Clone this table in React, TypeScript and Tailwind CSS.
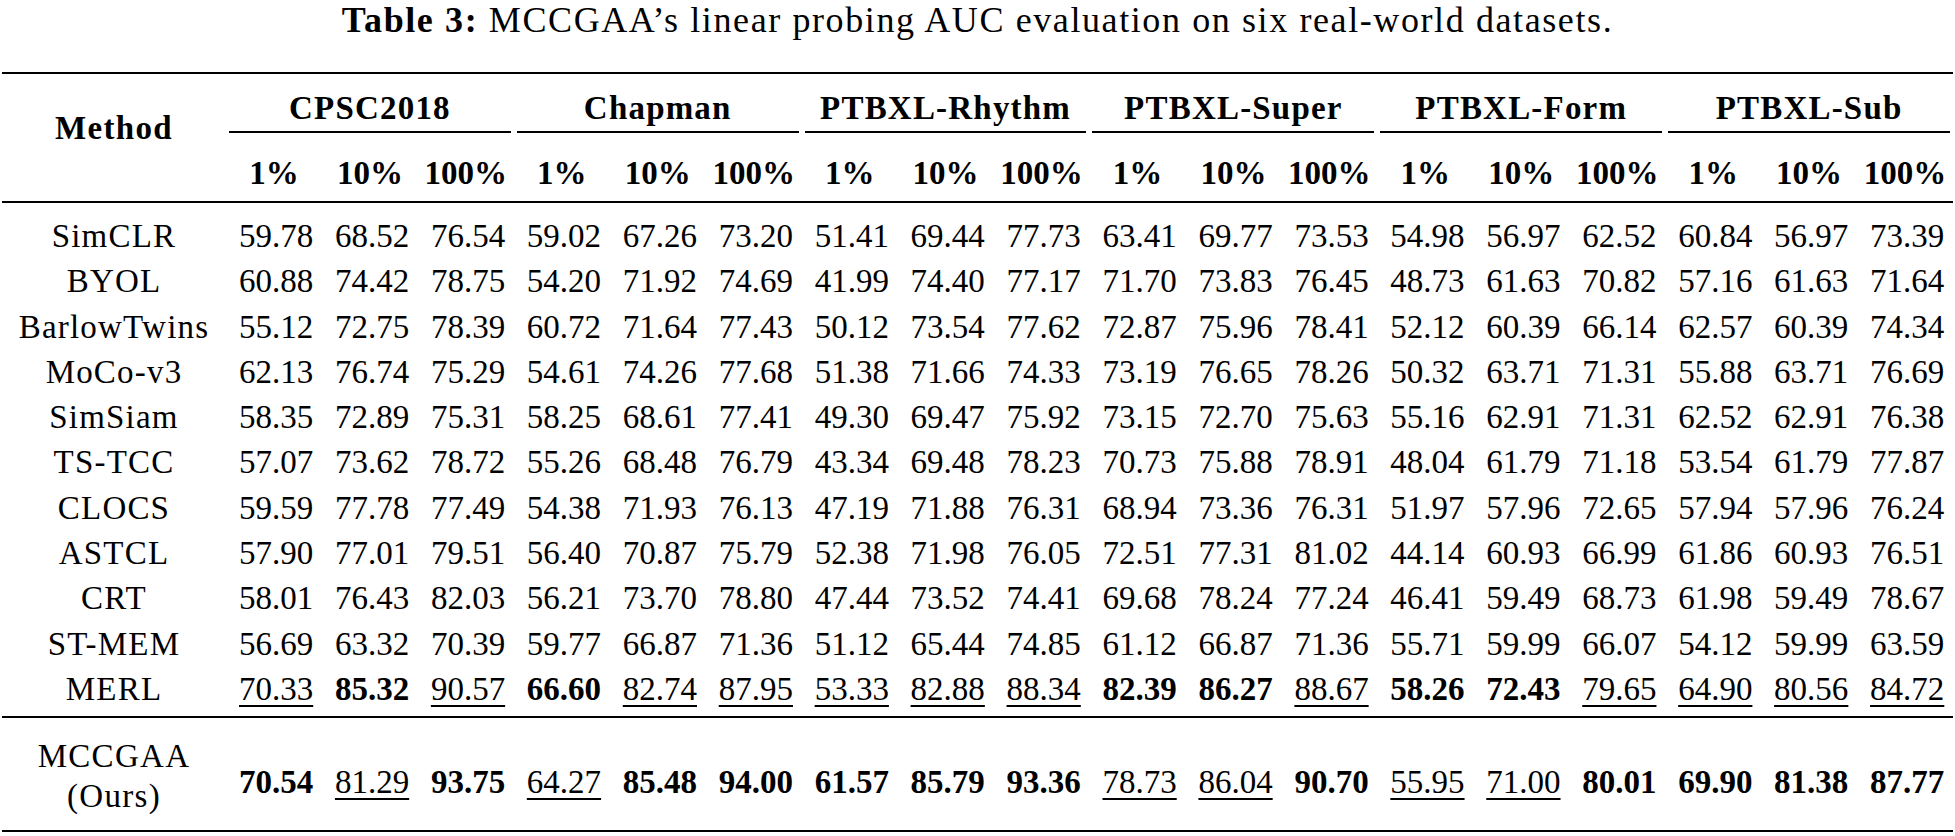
import React from "react";

type Cell = { v: string; b?: boolean; u?: boolean };

const datasets = ["CPSC2018", "Chapman", "PTBXL-Rhythm", "PTBXL-Super", "PTBXL-Form", "PTBXL-Sub"];
const pcts = ["1%", "10%", "100%"];

const plain: [string, string][] = [
  ["SimCLR", "59.78 68.52 76.54 59.02 67.26 73.20 51.41 69.44 77.73 63.41 69.77 73.53 54.98 56.97 62.52 60.84 56.97 73.39"],
  ["BYOL", "60.88 74.42 78.75 54.20 71.92 74.69 41.99 74.40 77.17 71.70 73.83 76.45 48.73 61.63 70.82 57.16 61.63 71.64"],
  ["BarlowTwins", "55.12 72.75 78.39 60.72 71.64 77.43 50.12 73.54 77.62 72.87 75.96 78.41 52.12 60.39 66.14 62.57 60.39 74.34"],
  ["MoCo-v3", "62.13 76.74 75.29 54.61 74.26 77.68 51.38 71.66 74.33 73.19 76.65 78.26 50.32 63.71 71.31 55.88 63.71 76.69"],
  ["SimSiam", "58.35 72.89 75.31 58.25 68.61 77.41 49.30 69.47 75.92 73.15 72.70 75.63 55.16 62.91 71.31 62.52 62.91 76.38"],
  ["TS-TCC", "57.07 73.62 78.72 55.26 68.48 76.79 43.34 69.48 78.23 70.73 75.88 78.91 48.04 61.79 71.18 53.54 61.79 77.87"],
  ["CLOCS", "59.59 77.78 77.49 54.38 71.93 76.13 47.19 71.88 76.31 68.94 73.36 76.31 51.97 57.96 72.65 57.94 57.96 76.24"],
  ["ASTCL", "57.90 77.01 79.51 56.40 70.87 75.79 52.38 71.98 76.05 72.51 77.31 81.02 44.14 60.93 66.99 61.86 60.93 76.51"],
  ["CRT", "58.01 76.43 82.03 56.21 73.70 78.80 47.44 73.52 74.41 69.68 78.24 77.24 46.41 59.49 68.73 61.98 59.49 78.67"],
  ["ST-MEM", "56.69 63.32 70.39 59.77 66.87 71.36 51.12 65.44 74.85 61.12 66.87 71.36 55.71 59.99 66.07 54.12 59.99 63.59"],
  ["MERL", "u70.33 b85.32 u90.57 b66.60 u82.74 u87.95 u53.33 u82.88 u88.34 b82.39 b86.27 u88.67 b58.26 b72.43 u79.65 u64.90 u80.56 u84.72"],
];

const ours = "b70.54 u81.29 b93.75 u64.27 b85.48 b94.00 b61.57 b85.79 b93.36 u78.73 u86.04 b90.70 u55.95 u71.00 b80.01 b69.90 b81.38 b87.77";

function parse(s: string): Cell[] {
  return s.split(" ").map((t) => {
    if (t[0] === "b") return { v: t.slice(1), b: true };
    if (t[0] === "u") return { v: t.slice(1), u: true };
    return { v: t };
  });
}

function Num({ c }: { c: Cell }) {
  return (
    <div className="pl-[13px] whitespace-nowrap text-left">
      <span
        className={
          c.b
            ? "font-bold"
            : c.u
            ? "underline decoration-[2px] underline-offset-[5px]"
            : ""
        }
      >
        {c.v}
      </span>
    </div>
  );
}

const grid = "grid grid-cols-[224px_repeat(18,minmax(0,1fr))]";

export default function App() {
  return (
    <div className="w-[1955px] h-[836px] bg-white text-black font-['Liberation_Serif',serif] text-[33px] overflow-hidden">
      <div className="h-[72px] text-center text-[36px] leading-[40px] tracking-[1.6px] whitespace-nowrap">
        <span className="font-bold">Table 3:</span> MCCGAA’s linear probing AUC evaluation on six real-world datasets.
      </div>
      <div className="mx-[2px]">
        <div className="h-[2px] bg-black" />
        <div className={grid}>
          <div className="row-span-2 text-center font-bold pt-[34px] leading-[40px] tracking-[1.3px]">Method</div>
          {datasets.map((d) => (
            <div key={d} className="col-span-3 flex flex-col">
              <div className="text-center font-bold pt-[14px] pb-[3px] leading-[40px] whitespace-nowrap tracking-[1.2px]">
                {d}
              </div>
              <div className="mx-[3px] h-[2px] bg-black" />
            </div>
          ))}
          {datasets.flatMap((d) =>
            pcts.map((p) => (
              <div key={d + p} className="text-center font-bold pt-[20px] pb-[8px] leading-[40px]">
                {p}
              </div>
            ))
          )}
        </div>
        <div className="h-[2px] bg-black" />
        <div className={grid + " pt-[11px] pb-[4px] leading-[45.3px]"}>
          {plain.map(([name, vals]) => (
            <React.Fragment key={name}>
              <div className="text-center whitespace-nowrap tracking-[1.2px]">{name}</div>
              {parse(vals).map((c, i) => (
                <Num key={i} c={c} />
              ))}
            </React.Fragment>
          ))}
        </div>
        <div className="h-[2px] bg-black" />
        <div className={grid + " h-[112px]"}>
          <div className="text-center pt-[18px] leading-[40px] tracking-[1.3px]">
            <div>MCCGAA</div>
            <div>(Ours)</div>
          </div>
          {parse(ours).map((c, i) => (
            <div key={i} className="pt-[44px] leading-[40px]">
              <Num c={c} />
            </div>
          ))}
        </div>
        <div className="h-[2px] bg-black" />
      </div>
    </div>
  );
}
